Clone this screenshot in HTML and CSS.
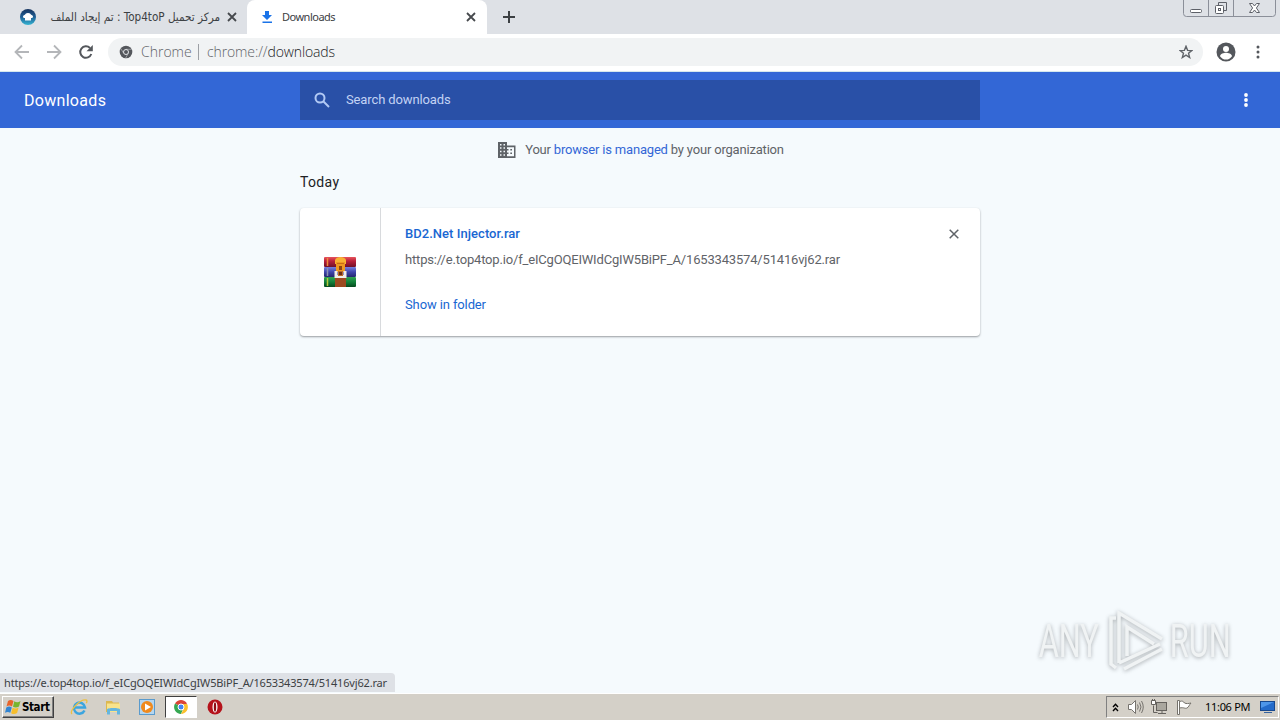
FILE: index.html
```html
<!DOCTYPE html>
<html lang="en">
<head>
    <meta charset="UTF-8">
    <meta name="viewport" content="width=device-width, initial-scale=1.0">
    <title>Downloads</title>
    <link rel="stylesheet" href="styles.css">
</head>
<body>
    <div class="tabstrip">
        <div class="tab">
            <svg class="favicon" width="16" height="16" viewBox="0 0 16 16">
                <defs>
                    <linearGradient id="fav" x1="0" y1="0" x2="0" y2="1">
                        <stop offset="0" stop-color="#17345f"/>
                        <stop offset=".5" stop-color="#1f5f96"/>
                        <stop offset="1" stop-color="#35b5d2"/>
                    </linearGradient>
                </defs>
                <circle cx="8" cy="8" r="8" fill="url(#fav)"/>
                <path d="M8 4c2.500 0 2.500 1.500 3.500 2 2 .5 2 3 0 3H11v2.500H5V9h-.5c-2 0-2-2.500 0-3C5.500 5.500 5.500 4 8 4z" fill="#fff"/>
            </svg>
            <span class="tab-title arabic" dir="rtl">مركز تحميل Top4toP : تم إيجاد الملف</span>
            <svg class="tab-close" width="10" height="10" viewBox="0 0 10 10"><path d="M1 1l8 8M9 1L1 9"/></svg>
        </div>
        <div class="tab active">
            <svg class="favicon" width="16" height="16" viewBox="0 0 16 16" fill="#1a73e8">
                <path d="M6 2h4v4h3L8 11 3 6h3zM3.500 12.500h9.500V14H3.500z"/>
            </svg>
            <span class="tab-title">Downloads</span>
            <svg class="tab-close" width="10" height="10" viewBox="0 0 10 10"><path d="M1 1l8 8M9 1L1 9"/></svg>
        </div>
        <svg class="new-tab" width="12" height="12" viewBox="0 0 12 12"><path d="M6 0v12M0 6h12"/></svg>
        <svg class="window-controls" width="93" height="18" viewBox="0 0 93 18" fill="none">
            <path d="M.5 0v13.500a3 3 0 0 0 3 3h86a3 3 0 0 0 3-3V0M25.500 0v16M50.500 0v16" stroke="#8b8f99"/>
            <rect x="7.500" y="9.500" width="11" height="3" rx="1" fill="#fff" stroke="#5d6068"/>
            <path d="M35.500 5V2.500h8v8H41" stroke="#5d6068"/>
            <rect x="32.500" y="5.500" width="8" height="8" rx="1" fill="#fff" stroke="#5d6068"/>
            <rect x="35.500" y="8.500" width="2" height="2" stroke="#5d6068"/>
            <path d="M66.500 3.500h3l2 2.500 2-2.500h3L73.400 8l3.100 4.500h-3l-2-2.500-2 2.500h-3L69.600 8z" fill="#fff" stroke="#5d6068"/>
        </svg>
    </div>

    <div class="toolbar">
        <svg class="nav" width="16" height="16" viewBox="0 0 16 16"><path d="M15 8H2M8 1.500L1.500 8 8 14.500"/></svg>
        <svg class="nav" width="16" height="16" viewBox="0 0 16 16"><path d="M1 8h13M8 1.500L14.500 8 8 14.500"/></svg>
        <svg class="nav reload" width="16" height="16" viewBox="0 0 16 16">
            <path d="M13.300 10A5.700 5.700 0 1 1 12 4"/>
            <path class="solid" d="M14.800 1v6.300H8.500z"/>
        </svg>
        <div class="omnibox">
            <svg width="14" height="14" viewBox="0 0 14 14">
                <circle cx="7" cy="7" r="6.300" fill="#54575c"/>
                <path d="M7 4.300h5.700M4.700 8.300L1.800 3.600M9.300 8.300l-2.800 5" stroke="#a9acb0" stroke-width=".8"/>
                <circle cx="7" cy="7" r="2.500" fill="#54575c" stroke="#e4e6e9"/>
            </svg>
            <span class="origin">Chrome</span>
            <span class="divider"></span>
            <span class="url">chrome://<b>downloads</b></span>
            <svg class="star" width="14" height="14" viewBox="0 0 16 16">
                <path d="M8 1.500l1.800 4.600 4.900.3-3.800 3.100 1.300 4.800L8 11.600l-4.200 2.700 1.300-4.800-3.800-3.100 4.900-.3z"/>
            </svg>
        </div>
        <svg class="avatar" width="20" height="20" viewBox="0 0 20 20">
            <circle cx="10" cy="10" r="9.500" fill="#54575c"/>
            <circle cx="10" cy="7" r="3" fill="#fff"/>
            <path d="M4 14.300c0-2.400 4-3.500 6-3.500s6 1.100 6 3.500a7.200 7.200 0 0 1-12 0z" fill="#fff"/>
        </svg>
        <svg class="menu" width="4" height="14" viewBox="0 0 4 14"><circle cx="2" cy="2" r="1.500"/><circle cx="2" cy="7" r="1.500"/><circle cx="2" cy="12" r="1.500"/></svg>
    </div>

    <header class="page-header">
        <h1>Downloads</h1>
        <div class="search">
            <svg width="16" height="16" viewBox="0 0 16 16"><circle cx="6" cy="6" r="4.500"/><path d="M9.500 9.500L15 15"/></svg>
            <span>Search downloads</span>
        </div>
        <svg class="more" width="4" height="14" viewBox="0 0 4 14"><circle cx="2" cy="2" r="1.900"/><circle cx="2" cy="7" r="1.900"/><circle cx="2" cy="12" r="1.900"/></svg>
    </header>

    <main class="content">
        <div class="managed">
            <svg width="18" height="16" viewBox="0 0 18 16">
                <path fill="#5f6368" fill-rule="evenodd" d="M0 0h9v3.500h8.500V16H0zM2 2v1.500h1.500V2zM5.500 2v1.500H7V2zM2 5.300v1.500h1.500V5.300zM5.500 5.300v1.500H7V5.300zM2 8.700v1.500h1.500V8.700zM5.500 8.700v1.500H7V8.700zM2 12.300v1.500h1.500v-1.500zM5.500 12.300v1.500H7v-1.500zM9 5.200V7h1.500v1.500H9v2h1.500V12H9v2.200h7V5.200zM12.300 7H14v1.500h-1.700zM12.300 10.500H14V12h-1.700z"/>
            </svg>
            <span>Your <a>browser is managed</a> by your organization</span>
        </div>
        <h2>Today</h2>
        <div class="card">
            <div class="file-icon">
                <svg width="34" height="32" viewBox="0 0 34 32">
                    <defs>
                        <linearGradient id="red" x1="0" y1="0" x2="0" y2="1"><stop offset="0" stop-color="#e8555c"/><stop offset=".4" stop-color="#b9203b"/><stop offset="1" stop-color="#711027"/></linearGradient>
                        <linearGradient id="blue" x1="0" y1="0" x2="0" y2="1"><stop offset="0" stop-color="#7782df"/><stop offset=".5" stop-color="#3e45ac"/><stop offset="1" stop-color="#25276e"/></linearGradient>
                        <linearGradient id="green" x1="0" y1="0" x2="0" y2="1"><stop offset="0" stop-color="#31a351"/><stop offset=".5" stop-color="#128039"/><stop offset="1" stop-color="#06491e"/></linearGradient>
                    </defs>
                    <rect x="1" y="1" width="32" height="10" rx="1" fill="url(#red)"/>
                    <rect x="1" y="11" width="32" height="10" rx="1" fill="url(#blue)"/>
                    <rect x="1" y="21" width="32" height="10" rx="1" fill="url(#green)"/>
                    <path d="M4.500 2v8" stroke="#f08a3c" stroke-width="1.500"/>
                    <path d="M4.500 12v8" stroke="#8c93b4" stroke-width="1.500"/>
                    <path d="M4.500 22v8" stroke="#b6c93c" stroke-width="1.500"/>
                    <path d="M12 21h11v10H12z" fill="#9d4a20"/>
                    <path d="M12 4C13 0 22 0 23 4v4H12z" fill="#f8b133"/>
                    <path d="M13 6h9v10h-9z" fill="#ef9821"/>
                    <path d="M14 7.500h7" stroke="#c86d14"/>
                    <path d="M16 10h3v4h-3z" fill="#8c4212"/>
                    <path d="M11.500 15h3v4h6v-4h3v7h-12z" fill="#f2eee8"/>
                    <path d="M15 15h5v5h-5z" fill="#b86a2a"/>
                    <path d="M16 16h3v3h-3z" fill="#6b2c13"/>
                </svg>
            </div>
            <div class="details">
                <div class="file-name">BD2.Net Injector.rar</div>
                <div class="file-url">https://e.top4top.io/f_eICgOQEIWIdCgIW5BiPF_A/1653343574/51416vj62.rar</div>
                <div class="show">Show in folder</div>
            </div>
            <svg class="remove" width="10" height="10" viewBox="0 0 10 10"><path d="M.7.700l8.600 8.600M9.300.700L.7 9.300"/></svg>
        </div>
        <div class="status">https://e.top4top.io/f_eICgOQEIWIdCgIW5BiPF_A/1653343574/51416vj62.rar</div>
        <div class="watermark">
            <span class="word">ANY</span>
            <svg width="58" height="64" viewBox="0 0 58 64">
                <path d="M9 9H4v46l5 4M12 54V4l43 26M20 47V18l27 17M12 54l41-19M17 60l38-20"/>
            </svg>
            <span class="word">RUN</span>
        </div>
    </main>

    <div class="taskbar">
        <div class="start">
            <svg width="17" height="16" viewBox="0 0 17 16">
                <path d="M3 2c2-1.500 3.500-1.300 5.500 0L7 7.500C5 6.300 3.500 6.300 1.500 7.500z" fill="#e8642a"/>
                <path d="M9.300 2.300c2 1.200 4 1.200 6.200-.3L14 7.500c-2 1.300-4 1.500-6 .3z" fill="#78b52f"/>
                <path d="M1.300 8.500c2-1.300 3.700-1.200 5.500 0l-1.500 5.300C3.500 12.600 2 12.600 0 13.800z" fill="#3285d2"/>
                <path d="M7.600 8.800c2 1.200 4 1 6-.2l-1.500 5.400c-2 1.300-4 1.400-6 .2z" fill="#f6be2d"/>
            </svg>
            <span>Start</span>
        </div>
        <div class="quick">
            <div class="app">
                <svg width="18" height="18" viewBox="0 0 18 18" fill="none">
                    <path d="M14.500 12.500A5.500 5.500 0 1 1 15 9.500H5" stroke="#3ba5df" stroke-width="2.500"/>
                    <path d="M2 16c-3-3 8-15 14-14 1.500.3 1 2 .3 3.200" stroke="#edc042" stroke-width="1.300"/>
                </svg>
            </div>
            <div class="app">
                <svg width="18" height="18" viewBox="0 0 18 18">
                    <path d="M2 3h6l1 1.500h6V14H2z" fill="#dcb850"/>
                    <path d="M3 5.500h13V14H3z" fill="#f8e38c"/>
                    <path d="M3 16.500v-5c0-2 13-2 13 0v5h-3v-3.500H6v3.500z" fill="#65b6df"/>
                </svg>
            </div>
            <div class="app">
                <svg width="18" height="18" viewBox="0 0 18 18">
                    <rect x="1.500" y="1.500" width="15" height="15" fill="#b5d6ef" stroke="#5a9bcd"/>
                    <circle cx="9" cy="9" r="6" fill="#f08a1d"/>
                    <path d="M7 5.500L13 9l-6 3.500z" fill="#fff"/>
                </svg>
            </div>
            <div class="app pressed">
                <svg width="14" height="14" viewBox="0 0 14 14">
                    <path d="M7 7L1 3.500A7 7 0 0 1 13 3.500z" fill="#db4437"/>
                    <path d="M7 7L1 3.500A7 7 0 0 0 7 14L9.500 8z" fill="#36a852"/>
                    <path d="M7 4h6.200A7 7 0 0 1 7 14l2.700-5z" fill="#fbc02d"/>
                    <circle cx="7" cy="7" r="3" fill="#4285f4" stroke="#fff"/>
                </svg>
            </div>
            <div class="app">
                <svg width="16" height="16" viewBox="0 0 16 16">
                    <circle cx="8" cy="8" r="7.500" fill="#b5121b"/>
                    <ellipse cx="8" cy="8" rx="2.500" ry="5.500" fill="#fff"/>
                    <ellipse cx="8" cy="8" rx="1.200" ry="4.800" fill="#8f0c13"/>
                </svg>
            </div>
        </div>
        <div class="tray">
            <svg width="7" height="9" viewBox="0 0 7 9" fill="none" stroke="#000" stroke-width="1.400"><path d="M1 4l2.500-2.700L6 4M1 8l2.500-2.700L6 8"/></svg>
            <svg width="17" height="16" viewBox="0 0 17 16" fill="none" stroke="#76736e">
                <path d="M1.500 5.500h3l4-4v13l-4-4h-3z" fill="#fff"/>
                <path d="M10.500 5.500q1.500 2.500 0 5M12.500 3.500q3 4.500 0 9M14.500 2q3.500 6 0 12"/>
            </svg>
            <svg width="17" height="16" viewBox="0 0 17 16" fill="none" stroke="#65625e">
                <rect x="5.500" y="3.500" width="10" height="8" fill="#aaa79f"/>
                <path d="M7 14.500h8M11 12v2M2.500 6.500v7h4"/>
                <path d="M.5 1.500h4v4h-4z" fill="#fff"/>
                <path d="M1.500 0v2M3.500 0v2"/>
            </svg>
            <svg width="17" height="16" viewBox="0 0 17 16" fill="#fff" stroke="#75726c">
                <path d="M1.500 1.500h2v14h-2z"/>
                <path d="M3.500 2.500c3-1 4 0 5 1.500 2 1 4 .5 6.500 0-2 2-2 4-4 5-2 1-3-1-7.500 0z"/>
            </svg>
            <span class="clock">11:06 PM</span>
            <svg width="16" height="14" viewBox="0 0 16 14">
                <rect x=".5" y="1.500" width="14" height="9" fill="#246bca" stroke="#17488e"/>
                <path d="M1 2h13L1 8z" fill="#4e96e9"/>
                <path d="M4 12.500h8" stroke="#35629e"/>
            </svg>
        </div>
    </div>
</body>
</html>
```
FILE: styles.css
```css
* {
    box-sizing: border-box;
}

body {
    margin: 0;
    width: 1280px;
    height: 720px;
    display: flex;
    flex-direction: column;
    overflow: hidden;
    background: #f5fafd;
    font-family: Roboto, "Liberation Sans", sans-serif;
    font-size: 13px;
}

svg {
    display: block;
    flex: none;
}

/* tabs */
.tabstrip {
    display: flex;
    height: 34px;
    background: #dee1e6;
    font-family: "Noto Sans", "DejaVu Sans", sans-serif;
    font-size: 11px;
    color: #3c4043;
}

.tab {
    display: flex;
    align-items: center;
    width: 247px;
    padding: 0 10px 0 20px;
}

.tab.active {
    width: 240px;
    padding: 0 11px 0 12px;
    background: #fff;
    border-radius: 8px 8px 0 0;
}

.tab-title {
    flex: 1;
    margin-left: 7px;
    padding-bottom: 2px;
    white-space: nowrap;
    letter-spacing: -0.5px;
}

.tab-title.arabic {
    font-family: "DejaVu Sans Condensed", "DejaVu Sans", sans-serif;
    font-size: 11.6px;
    letter-spacing: 0;
    margin: 0 7px 0 6px;
    padding-bottom: 0;
    overflow: hidden;
}

.tab-close {
    fill: none;
    stroke: #46494d;
    stroke-width: 1.8;
}

.new-tab {
    margin: 11px 0 0 16px;
    stroke: #3c4043;
    stroke-width: 2;
}

.window-controls {
    margin-left: auto;
    margin-right: 4px;
}

/* toolbar */
.toolbar {
    display: flex;
    align-items: center;
    height: 38px;
    padding: 0 20px 2px 14px;
    background: #fff;
    border-bottom: 1px solid #d5e8ed;
}

.nav {
    margin-right: 16px;
    fill: none;
    stroke: #b4b6b9;
    stroke-width: 1.8;
}

.nav.reload {
    margin-right: 14px;
    stroke: #54575c;
    stroke-width: 2;
}

.nav .solid {
    fill: #54575c;
    stroke: none;
}

.omnibox {
    display: flex;
    align-items: center;
    width: 1095px;
    height: 28px;
    padding: 0 10px 0 11px;
    border-radius: 14px;
    background: #f1f3f4;
    font-family: "Open Sans", "Noto Sans", sans-serif;
    font-size: 14px;
    font-weight: 300;
    color: #5f6368;
}

.origin {
    width: 50px;
    margin-left: 8px;
    white-space: nowrap;
}

.divider {
    width: 1px;
    height: 16px;
    margin: 0 8px 0 7px;
    background: #9da0a5;
}

.url {
    letter-spacing: -0.12px;
}

.url b {
    font-weight: 300;
    color: #202124;
}

.star {
    margin-left: auto;
    fill: none;
    stroke: #5f6368;
    stroke-width: 1.6;
}

.avatar {
    margin-left: 13px;
}

.menu {
    margin-left: auto;
    fill: #54575c;
}

/* downloads page */
.page-header {
    display: flex;
    align-items: center;
    height: 56px;
    padding: 0 32px 0 24px;
    background: #3367d6;
    color: #fff;
}

.page-header h1 {
    width: 276px;
    margin: 0;
    font-size: 16px;
    font-weight: 400;
    letter-spacing: 0.3px;
}

.search {
    display: flex;
    align-items: center;
    gap: 16px;
    width: 680px;
    height: 40px;
    padding-left: 14px;
    background: #2950a7;
    color: #c3d3f4;
    letter-spacing: -0.12px;
}

.search span {
    padding-bottom: 2px;
}

.search svg {
    fill: none;
    stroke: #b1c9f4;
    stroke-width: 2;
}

.more {
    margin-left: auto;
    fill: #fff;
}

.content {
    position: relative;
    height: 565px;
    display: flex;
    flex-direction: column;
    align-items: center;
}

.managed {
    display: flex;
    align-items: center;
    gap: 9px;
    height: 44px;
    margin-left: 2px;
    color: #5f6368;
    white-space: nowrap;
    letter-spacing: -0.19px;
}

.managed span {
    padding-bottom: 2px;
}

.managed a {
    color: #3367d6;
}

.content h2 {
    width: 680px;
    margin: 0;
    height: 36px;
    line-height: 21px;
    font-size: 14px;
    font-weight: 400;
    letter-spacing: 0.35px;
    color: #202124;
}

.card {
    display: flex;
    width: 680px;
    height: 128px;
    background: #fff;
    border-radius: 4px;
    box-shadow: 0 1px 2px rgba(60, 64, 67, 0.5);
}

.file-icon {
    display: flex;
    align-items: center;
    justify-content: center;
    width: 81px;
    border-right: 1px solid #d8dadd;
}

.details {
    flex: 1;
    padding: 16px 0 0 24px;
    line-height: 20px;
    color: #5f6368;
}

.file-name {
    font-weight: 500;
    letter-spacing: 0.04px;
    color: #1967d2;
}

.file-url {
    margin-top: 6px;
    white-space: nowrap;
    letter-spacing: -0.175px;
}

.show {
    margin-top: 25px;
    letter-spacing: -0.12px;
    color: #1967d2;
}

.remove {
    margin: 21px 21px 0 0;
    stroke: #5f6368;
    stroke-width: 1.5;
}

/* link preview bubble over the page */
.status {
    position: absolute;
    left: 0;
    bottom: 1px;
    width: 395px;
    height: 19px;
    padding-left: 4px;
    border-radius: 0 4px 0 0;
    background: #dee1e6;
    font-family: "Noto Sans", sans-serif;
    font-size: 11px;
    line-height: 19px;
    letter-spacing: -0.165px;
    color: #3c4043;
    white-space: nowrap;
}

.watermark {
    position: absolute;
    right: 46px;
    bottom: 20px;
    display: flex;
    align-items: center;
    justify-content: space-between;
    width: 196px;
    height: 64px;
    filter: drop-shadow(0 1px 2px rgba(70, 75, 80, 0.45));
}

.watermark svg {
    fill: none;
    stroke: #f0f3f4;
    stroke-width: 3.5;
}

.word {
    width: 65px;
    padding-left: 1px;
    font-size: 46px;
    font-weight: 400;
    color: #f0f3f4;
    transform: scaleX(0.67);
    transform-origin: left;
}

/* taskbar */
.taskbar {
    display: flex;
    align-items: center;
    height: 27px;
    padding: 2px 1px 2px 2px;
    background: #d4d0c8;
    border-top: 1px solid #fff;
    font-family: "DejaVu Sans Condensed", "DejaVu Sans", sans-serif;
}

.start {
    display: flex;
    align-items: center;
    width: 52px;
    height: 22px;
    padding-left: 2px;
    border: 1px solid;
    border-color: #fff #404040 #404040 #fff;
    box-shadow: inset -1px -1px #808080;
    font-size: 11.5px;
    font-weight: 700;
    letter-spacing: -0.4px;
    color: #000;
}

.quick {
    display: flex;
    margin-left: 9px;
    gap: 2px;
}

.app {
    display: flex;
    align-items: center;
    justify-content: center;
    width: 32px;
    height: 22px;
}

.app.pressed {
    background: #fff;
    border: 1px solid;
    border-color: #404040 #fff #fff #404040;
}

.tray {
    display: flex;
    align-items: center;
    gap: 7.5px;
    width: 173px;
    height: 22px;
    margin-left: auto;
    padding: 0 2px 0 5px;
    border: 1px solid;
    border-color: #808080 #fff #fff #808080;
}

.clock {
    flex: 1;
    margin-left: 5px;
    padding-bottom: 1px;
    font-family: "Noto Sans", sans-serif;
    font-size: 11px;
    letter-spacing: -0.3px;
    white-space: nowrap;
    color: #000;
}
```
